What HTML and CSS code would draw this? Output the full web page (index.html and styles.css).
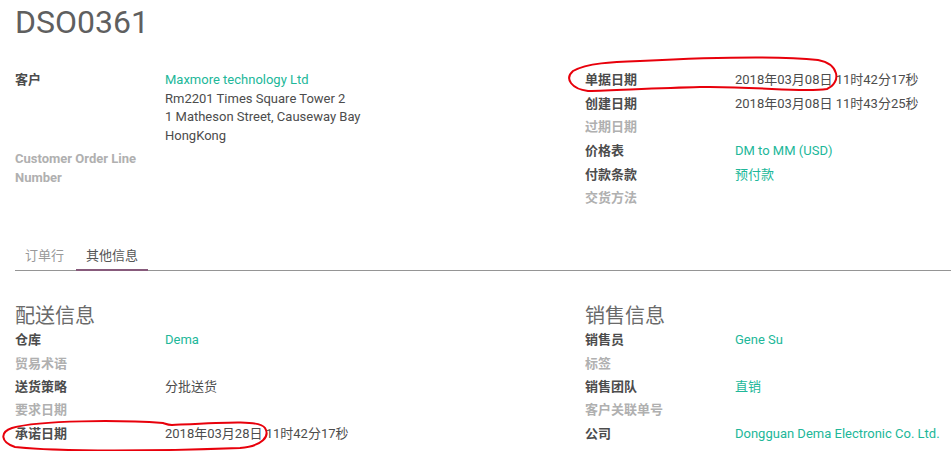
FILE: index.html
```html
<!DOCTYPE html>
<html lang="zh">
<head>
<meta charset="utf-8">
<title>DSO0361</title>
<link rel="stylesheet" href="styles.css">
</head>
<body>
<div class="sheet">
  <h1 class="title">DSO0361</h1>
  <div class="groups top">
    <div class="group">
      <div class="label">客户</div>
      <div class="value"><span class="link">Maxmore technology Ltd</span><br>Rm2201 Times Square Tower 2<br>1 Matheson Street, Causeway Bay<br>HongKong</div>
      <div class="label empty">Customer Order Line Number</div>
      <div class="value"></div>
    </div>
    <div class="group">
      <div class="label">单据日期</div>
      <div class="value">2018年03月08日 11时42分17秒</div>
      <div class="label">创建日期</div>
      <div class="value">2018年03月08日 11时43分25秒</div>
      <div class="label empty">过期日期</div>
      <div class="value"></div>
      <div class="label">价格表</div>
      <div class="value"><span class="link">DM to MM (USD)</span></div>
      <div class="label">付款条款</div>
      <div class="value"><span class="link">预付款</span></div>
      <div class="label empty">交货方法</div>
      <div class="value"></div>
    </div>
  </div>

  <ul class="tabs">
    <li class="tab">订单行</li>
    <li class="tab active">其他信息</li>
  </ul>

  <div class="groups bottom">
    <div class="group">
      <h2 class="sep">配送信息</h2>
      <div class="label">仓库</div>
      <div class="value"><span class="link">Dema</span></div>
      <div class="label empty">贸易术语</div>
      <div class="value"></div>
      <div class="label">送货策略</div>
      <div class="value">分批送货</div>
      <div class="label empty">要求日期</div>
      <div class="value"></div>
      <div class="label">承诺日期</div>
      <div class="value">2018年03月28日 11时42分17秒</div>
    </div>
    <div class="group">
      <h2 class="sep">销售信息</h2>
      <div class="label">销售员</div>
      <div class="value"><span class="link">Gene Su</span></div>
      <div class="label empty">标签</div>
      <div class="value"></div>
      <div class="label">销售团队</div>
      <div class="value"><span class="link">直销</span></div>
      <div class="label empty">客户关联单号</div>
      <div class="value"></div>
      <div class="label">公司</div>
      <div class="value"><span class="link">Dongguan Dema Electronic Co. Ltd.</span></div>
    </div>
  </div>
</div>

<svg class="marks" width="951" height="451" viewBox="0 0 951 451" xmlns="http://www.w3.org/2000/svg">
  <path d="M 588 91 C 572 89, 564 79, 573 71 C 587 63, 612 62, 640 61 C 700 58, 780 56, 818 60 C 839 64, 842 82, 827 89 C 800 93, 760 86, 700 87 C 660 88, 620 90, 588 91" />
  <path d="M 163 423 C 120 420, 40 420, 12 428 C 0 432, 0 442, 15 447 C 60 452, 160 451, 240 448 C 263 446, 270 436, 265 428 C 260 420, 230 422, 172 425 C 168 425, 166 424, 163 423" />
</svg>
</body>
</html>
```

FILE: styles.css
```css
html, body {
  margin: 0;
  padding: 0;
  overflow: hidden;
  background: #ffffff;
}

body {
  position: relative;
  width: 951px;
  height: 451px;
  font-family: Roboto, "Noto Sans CJK SC", sans-serif;
  font-size: 13px;
  line-height: 18.57px;
  color: #4c4c4c;
}

.sheet {
  padding: 4px 0 0 15px;
}

.title {
  margin: 0 0 31px;
  font-size: 32px;
  line-height: 36px;
  font-weight: 400;
  color: #5f5f5f;
}

.groups {
  display: grid;
  grid-template-columns: 570px 1fr;
}

.group {
  display: grid;
  grid-template-columns: 150px 1fr;
  align-content: start;
}

.label {
  padding: 0 15px 4.9px 0;
  font-weight: 700;
  color: #4c4c4c;
}

.label.empty {
  color: #b0b0b0;
}

.value {
  padding-bottom: 4.9px;
  white-space: nowrap;
}

.top .label,
.top .value {
  padding-bottom: 5.1px;
}

.link {
  color: #21b799;
}

.tabs {
  display: flex;
  list-style: none;
  margin: 31px 0 0;
  padding: 0;
  border-bottom: 1px solid #959595;
}

.tab {
  padding: 3px 10px;
  margin: 0 2px -1px 0;
  border-bottom: 2px solid transparent;
  color: #999999;
}

.tab.active {
  color: #555555;
  border-bottom-color: #875a7b;
}

.sep {
  grid-column: 1 / -1;
  margin: 33px 0 3.6px;
  font-size: 20px;
  line-height: 24px;
  font-weight: 400;
  color: #6a6a6a;
}

.marks {
  position: absolute;
  left: 0;
  top: 0;
  pointer-events: none;
}

.marks path {
  fill: none;
  stroke: #e8000b;
  stroke-width: 2;
  stroke-linecap: round;
}
```
